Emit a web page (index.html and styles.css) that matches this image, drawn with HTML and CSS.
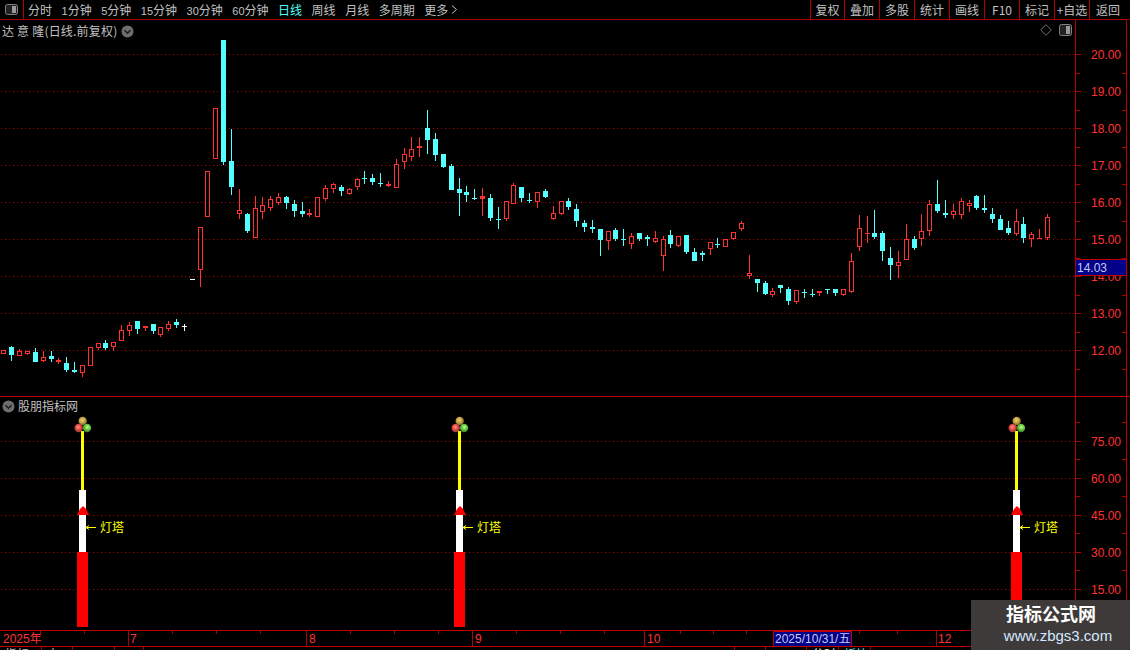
FILE: index.html
```html
<!DOCTYPE html>
<html lang="zh-CN">
<head>
<meta charset="utf-8">
<title>达意隆 日线</title>
<link rel="stylesheet" href="styles.css">
</head>
<body>
<div class="app">
  <header class="toolbar">
    <div class="panel-toggle">
      <svg class="icon-toggle" width="13" height="11" viewBox="0 0 13 11"><rect class="ti-frame" x="0.5" y="0.5" width="12" height="10" rx="2"/><rect class="ti-fill" x="7" y="2" width="4" height="7"/></svg>
    </div>
    <nav class="periods">
      <span>分时</span><span><i class="n">1</i>分钟</span><span><i class="n">5</i>分钟</span><span><i class="n">15</i>分钟</span><span><i class="n">30</i>分钟</span><span><i class="n">60</i>分钟</span><span class="on">日线</span><span>周线</span><span>月线</span><span>多周期</span><span class="more">更多<svg class="more-arrow" width="7" height="9" viewBox="0 0 7 9"><path d="M1 .5 5.5 4.5 1 8.5"/></svg></span>
    </nav>
    <nav class="actions">
      <span>复权</span><span>叠加</span><span>多股</span><span>统计</span><span>画线</span><span>F10</span><span>标记</span><span>+自选</span><span>返回</span>
    </nav>
  </header>

  <section class="pane pane-price">
    <div class="plot">
      <div class="pane-title">
        <span class="stock wide">达 意 隆(日线.前复权)</span>
        <svg class="chev" width="13" height="13" viewBox="0 0 13 13"><circle class="chev-disc" cx="6.5" cy="6.5" r="6"/><path class="chev-mark" d="M3.5 5.2 6.5 8.2 9.5 5.2"/></svg>
      </div>
      <div class="pane-tools">
        <svg width="12" height="12" viewBox="0 0 12 12"><path class="diamond" d="M6 .7 11.3 6 6 11.3 .7 6Z"/></svg>
        <svg class="icon-toggle" width="13" height="12" viewBox="0 0 13 12"><rect class="ti-frame" x="0.5" y="0.5" width="12" height="11" rx="2"/><rect class="ti-fill" x="7" y="2" width="4" height="8"/></svg>
      </div>
      <svg class="chart" width="1075" height="376" viewBox="0 20 1075 376">
        <g class="grid">
          <path d="M1 54.5H1075M1 91.5H1075M1 128.5H1075M1 165.5H1075M1 202.5H1075M1 239.5H1075M1 276.5H1075M1 313.5H1075M1 350.5H1075"/>
        </g>
        <g id="candles"></g>
      </svg>
    </div>
    <svg class="axis" width="54" height="376" viewBox="1076 20 54 376">
      <path class="axis-line" d="M1126.5 20V396M1076 54.5H1081M1076 91.5H1081M1076 128.5H1081M1076 165.5H1081M1076 202.5H1081M1076 239.5H1081M1076 276.5H1081M1076 313.5H1081M1076 350.5H1081M1076 73.5H1080M1076 110.5H1080M1076 147.5H1080M1076 184.5H1080M1076 221.5H1080M1076 258.5H1080M1076 295.5H1080M1076 332.5H1080M1076 369.5H1080M1122 73.5H1126M1122 110.5H1126M1122 147.5H1126M1122 184.5H1126M1122 221.5H1126M1122 258.5H1126M1122 295.5H1126M1122 332.5H1126M1122 369.5H1126"/>
      <text class="tick" x="1091" y="59">20.00</text>
      <text class="tick" x="1091" y="96">19.00</text>
      <text class="tick" x="1091" y="133">18.00</text>
      <text class="tick" x="1091" y="170">17.00</text>
      <text class="tick" x="1091" y="207">16.00</text>
      <text class="tick" x="1091" y="244">15.00</text>
      <text class="tick" x="1091" y="281">14.00</text>
      <text class="tick" x="1091" y="318">13.00</text>
      <text class="tick" x="1091" y="355">12.00</text>
      <rect class="cursor-box" x="1075.5" y="259.5" width="51" height="16"/>
      <text class="cursor-text" x="1077" y="272">14.03</text>
    </svg>
  </section>

  <section class="pane pane-ind">
    <div class="plot">
      <div class="pane-title sub">
        <svg class="chev" width="13" height="13" viewBox="0 0 13 13"><circle class="chev-disc" cx="6.5" cy="6.5" r="6"/><path class="chev-mark" d="M3.5 5.2 6.5 8.2 9.5 5.2"/></svg>
        <span class="stock">股朋指标网</span>
      </div>
      <svg class="chart" width="1075" height="233" viewBox="0 397 1075 233">
        <defs>
          <radialGradient id="ballGold" cx="0.45" cy="0.4" r="0.6"><stop offset="0" stop-color="#f2d070"/><stop offset="0.6" stop-color="#c09a3a"/><stop offset="1" stop-color="#6d6040"/></radialGradient>
          <radialGradient id="ballRed" cx="0.45" cy="0.4" r="0.6"><stop offset="0" stop-color="#ff9a90"/><stop offset="0.6" stop-color="#e03c34"/><stop offset="1" stop-color="#8a4a44"/></radialGradient>
          <radialGradient id="ballGreen" cx="0.55" cy="0.4" r="0.6"><stop offset="0" stop-color="#c8ff90"/><stop offset="0.6" stop-color="#58c030"/><stop offset="1" stop-color="#3f7a38"/></radialGradient>
          <g id="tower">
            <rect class="t-yellow" x="81" y="431" width="3" height="59"/>
            <rect class="t-white" x="79" y="490" width="7" height="62"/>
            <rect class="t-red" x="77" y="552" width="11" height="75"/>
            <path class="t-red" d="M77 515 80 509 83 506 86 509 89 515Z"/>
            <path class="t-arrow" d="M86 527.5H96M86 527.5 89 525.5M86 527.5 89 529.5"/>
            <circle cx="82.7" cy="421" r="4.2" fill="url(#ballGold)"/>
            <circle cx="78.7" cy="428" r="4.2" fill="url(#ballRed)"/>
            <circle cx="87" cy="428" r="4.2" fill="url(#ballGreen)"/>
          </g>
        </defs>
        <g class="grid">
          <path d="M1 441.5H1075M1 478.5H1075M1 515.5H1075M1 552.5H1075M1 589.5H1075"/>
        </g>
        <use href="#tower"/>
        <use href="#tower" x="377"/>
        <use href="#tower" x="934"/>
        <text class="tower-label" x="100" y="532">灯塔</text>
        <text class="tower-label" x="477" y="532">灯塔</text>
        <text class="tower-label" x="1034" y="532">灯塔</text>
      </svg>
    </div>
    <svg class="axis" width="54" height="233" viewBox="1076 397 54 233">
      <path class="axis-line" d="M1126.5 397V630M1076 441.5H1081M1076 478.5H1081M1076 515.5H1081M1076 552.5H1081M1076 589.5H1081M1076 422.5H1080M1076 459.5H1080M1076 496.5H1080M1076 533.5H1080M1076 570.5H1080M1076 607.5H1080M1122 422.5H1126M1122 459.5H1126M1122 496.5H1126M1122 533.5H1126M1122 570.5H1126M1122 607.5H1126"/>
      <text class="tick" x="1091" y="446">75.00</text>
      <text class="tick" x="1091" y="483">60.00</text>
      <text class="tick" x="1091" y="520">45.00</text>
      <text class="tick" x="1091" y="557">30.00</text>
      <text class="tick" x="1091" y="594">15.00</text>
    </svg>
  </section>

  <svg class="timeline" width="1130" height="15" viewBox="0 631 1130 15">
    <path class="axis-line" d="M128.5 631V646M306.5 631V646M472.5 631V646M644.5 631V646M936.5 631V646M40.5 631V634M84.5 631V634M172.5 631V634M216.5 631V634M260.5 631V634M350.5 631V634M394.5 631V634M438.5 631V634M516.5 631V634M560.5 631V634M604.5 631V634M680.5 631V634M713.5 631V634M746.5 631V634M859.5 631V634M897.5 631V634"/>
    <text class="tick" x="3" y="643">2025年</text>
    <text class="tick" x="130" y="643">7</text>
    <text class="tick" x="309" y="643">8</text>
    <text class="tick" x="475" y="643">9</text>
    <text class="tick" x="647" y="643">10</text>
    <text class="tick" x="938" y="643">12</text>
    <rect class="cursor-box" x="773.5" y="631" width="78" height="15"/>
    <text class="cursor-text" x="775" y="643">2025/10/31/五</text>
  </svg>

  <footer class="status">
    <span>指标</span><span>大</span><span></span><span></span><span></span><span></span><span></span><span class="white">分时</span><span class="cyan">板块</span><span></span>
  </footer>

  <aside class="watermark">
    <strong>指标公式网</strong>
    <em>www.zbgs3.com</em>
  </aside>
</div>
<script src="chart.js"></script>
</body>
</html>
```

FILE: styles.css
```css
* { box-sizing: border-box; }
html, body { margin: 0; padding: 0; background: #000; }
body { width: 1130px; height: 650px; overflow: hidden; font-family: "Noto Sans CJK SC", "Liberation Sans", sans-serif; font-size: 12px; color: #c0c0c0; }
svg { display: block; }
.app { position: relative; width: 1130px; height: 650px; overflow: hidden; display: flex; flex-direction: column; }

.toolbar { display: flex; height: 20px; border-bottom: 1px solid #b00000; flex: none; }
.panel-toggle { width: 24px; border-right: 1px solid #b00000; display: flex; align-items: center; justify-content: center; padding-right: 1px; }
.ti-frame { fill: #222; stroke: #808080; stroke-width: 1; }
.ti-fill { fill: #9a9a9a; }
.periods { display: flex; gap: 9.5px; padding-left: 4px; line-height: 19px; flex: 1; white-space: nowrap; }
.periods .on { color: #54ffff; }
.periods .n { font-family: "Liberation Sans", sans-serif; font-style: normal; font-size: 11px; }
.periods .more { display: flex; align-items: center; gap: 3px; }
.more-arrow path { fill: none; stroke: #c0c0c0; stroke-width: 1; }
.actions { display: grid; grid-template-columns: 34px repeat(7, 35px) 41px; width: 320px; line-height: 19px; text-align: center; }
.actions span { border-left: 1px solid #b00000; white-space: nowrap; }
.actions span:last-child { padding-right: 4px; }

.pane { display: flex; flex: none; border-bottom: 1px solid #c00000; }
.pane-price { height: 377px; }
.pane-ind { height: 234px; }
.plot { position: relative; width: 1076px; border-right: 1px solid #b00000; }
.pane-title { position: absolute; left: 2px; top: 3px; display: flex; align-items: center; gap: 3px; line-height: 16px; z-index: 1; }
.pane-title .wide { letter-spacing: 0.2px; margin-right: 1px; }
.pane-title.sub { top: 1px; }
.pane-tools { position: absolute; right: 3px; top: 4px; display: flex; gap: 7px; z-index: 1; }
.chev-disc { fill: #6e6e6e; }
.chev-mark { fill: none; stroke: #1c1c1c; stroke-width: 1.6; }
.diamond { fill: none; stroke: #707070; stroke-width: 1; }

.grid path { fill: none; stroke: #b80000; stroke-width: 1; stroke-dasharray: 1 3; }
.candle-wick { shape-rendering: crispEdges; }
.candle-wick.up { fill: #ff3232; }
.candle-wick.down { fill: #54ffff; }
.body-up { fill: #000; stroke: #ff3232; stroke-width: 1; shape-rendering: crispEdges; }
.body-flat { fill: #ff3232; shape-rendering: crispEdges; }
.body-down { fill: #54ffff; shape-rendering: crispEdges; }
.candle-wick.mark, .body-mark { fill: #fff; shape-rendering: crispEdges; }

.axis { flex: none; }
.axis-line { fill: none; stroke: #b00000; stroke-width: 1; shape-rendering: crispEdges; }
.tick { fill: #ff3232; font-family: "Liberation Sans", "Noto Sans CJK SC", sans-serif; font-size: 12px; }
.cursor-box { fill: #000088; stroke: #c00000; stroke-width: 1; shape-rendering: crispEdges; }
.cursor-text { fill: #c8c8f0; font-family: "Liberation Sans", "Noto Sans CJK SC", sans-serif; font-size: 12px; }

.t-yellow { fill: #ffff00; shape-rendering: crispEdges; }
.t-white { fill: #fff; shape-rendering: crispEdges; }
.t-red { fill: #ff0000; }
.t-arrow { fill: none; stroke: #ffff00; stroke-width: 1; }
.tower-label { fill: #ffff00; font-family: "Noto Sans CJK SC", sans-serif; font-size: 12px; }

.timeline { flex: none; }
.status { flex: none; height: 4px; border-top: 1px solid #c00000; display: grid; grid-template-columns: 42px 31px 42px 29px 591px 31px 41px 32px 32px 1fr; overflow: hidden; line-height: 14px; }
.status span { border-right: 1px solid #b00000; padding-left: 5px; overflow: hidden; }
.status .white { color: #fff; }
.status .cyan { color: #54ffff; }

.watermark { position: absolute; right: 0; bottom: 0; width: 159px; height: 50px; background: #3e3a3a; display: flex; flex-direction: column; align-items: center; padding-left: 1px; }
.watermark strong { font-size: 18px; line-height: 27px; color: #fff; font-weight: 700; }
.watermark em { font-family: "Liberation Sans", sans-serif; font-style: normal; font-size: 15px; line-height: 18px; color: #d4e8ff; margin-left: 14px; }
```

FILE: chart.js
```js
// [column, bodyTop, bodyBottom, wickTop, wickBottom, kind]  r=hollow up, f=flat up, c=down, w=white
var DATA = [
[3,350,354,350,354,'r'],[11,347,355,346,361,'c'],[19,351,356,349,356,'r'],[27,351,354,351,355,'r'],
[35,352,362,348,362,'c'],[43,357,361,351,362,'r'],[51,356,359,351,362,'c'],[58,360,362,358,364,'f'],
[66,363,370,357,372,'c'],[74,370,372,362,373,'c'],[82,365,373,365,377,'r'],[90,347,366,347,366,'r'],
[98,343,348,343,350,'r'],[105,343,348,340,350,'c'],[113,342,347,342,351,'r'],[121,330,341,325,341,'r'],
[129,325,331,322,336,'r'],[137,321,329,321,334,'c'],[145,326,328,326,331,'f'],[153,324,331,324,334,'c'],
[160,327,335,327,337,'r'],[168,324,329,321,331,'r'],[176,322,325,319,328,'c'],[184,326,327,324,331,'w'],
[192,279,280,279,280,'w'],[200,227,270,227,287,'r'],[207,171,217,171,217,'r'],[215,108,159,108,159,'r'],
[223,40,162,40,165,'c'],[231,161,187,129,195,'c'],[239,210,214,189,219,'r'],[247,214,231,213,233,'c'],
[255,208,238,196,238,'r'],[262,205,212,197,219,'r'],[270,199,208,196,211,'r'],[278,197,203,193,205,'r'],
[286,197,203,196,209,'c'],[294,204,211,200,217,'c'],[302,211,214,202,217,'c'],[309,213,215,209,217,'f'],
[317,197,217,197,217,'r'],[325,188,199,185,201,'r'],[333,184,189,183,193,'r'],[341,187,191,185,196,'c'],
[349,189,194,188,195,'r'],[357,179,187,178,190,'r'],[364,178,179,171,184,'c'],[372,178,182,174,185,'c'],
[380,183,184,173,187,'c'],[388,184,186,181,187,'f'],[396,164,188,159,188,'r'],[404,154,162,148,169,'r'],
[411,149,157,137,161,'r'],[419,146,148,137,157,'f'],[427,128,140,110,154,'c'],[435,139,155,133,161,'c'],
[443,154,167,154,168,'c'],[451,166,190,164,190,'c'],[459,189,193,178,216,'c'],[466,192,195,186,202,'c'],
[474,198,199,189,200,'c'],[482,196,199,188,216,'f'],[490,198,218,194,221,'c'],[498,219,220,207,229,'c'],
[506,201,219,201,221,'r'],[513,185,204,183,204,'r'],[521,187,198,187,202,'c'],[529,200,201,193,203,'c'],
[537,192,202,192,208,'r'],[545,191,197,189,198,'c'],[553,213,219,206,220,'r'],[561,201,214,201,215,'r'],
[568,201,207,198,210,'c'],[576,209,221,204,227,'c'],[584,223,227,220,232,'c'],[592,227,229,220,233,'c'],
[600,229,240,229,256,'c'],[608,231,241,231,250,'r'],[615,230,239,228,241,'c'],[623,239,240,229,246,'c'],
[631,236,244,233,249,'r'],[639,233,239,233,241,'c'],[647,237,239,235,246,'c'],[655,238,242,231,243,'r'],
[663,239,256,236,271,'r'],[670,235,244,230,248,'c'],[678,236,246,236,247,'r'],[686,235,252,235,254,'c'],
[694,252,261,248,261,'c'],[702,253,255,251,261,'c'],[710,242,249,242,255,'r'],[717,244,245,238,248,'c'],
[725,239,247,239,247,'r'],[733,232,239,232,240,'r'],[741,223,229,221,231,'r'],[749,273,276,255,279,'r'],
[757,279,283,279,292,'c'],[765,283,294,281,295,'c'],[772,291,295,288,297,'r'],[780,285,288,285,293,'c'],
[788,289,301,287,305,'c'],[796,290,302,290,304,'r'],[804,292,293,289,298,'c'],[812,294,295,289,297,'c'],
[819,291,293,291,296,'f'],[827,289,290,289,294,'c'],[835,289,293,289,296,'c'],[843,289,295,289,296,'r'],
[851,261,292,253,293,'r'],[859,228,247,215,251,'r'],[867,233,234,216,243,'f'],[874,233,237,210,239,'c'],
[882,233,251,231,261,'c'],[890,258,265,247,280,'c'],[898,262,266,251,278,'r'],[906,239,260,224,260,'r'],
[914,239,248,236,250,'c'],[921,231,239,214,246,'r'],[929,204,231,200,236,'r'],[937,204,211,180,213,'c'],
[945,213,215,200,218,'c'],[953,211,215,204,219,'r'],[961,201,215,198,219,'r'],[969,203,206,200,212,'r'],
[976,196,208,195,210,'c'],[984,208,210,195,213,'c'],[992,214,219,208,223,'c'],[1000,219,230,215,230,'c'],
[1008,228,233,221,235,'c'],[1016,221,234,209,236,'r'],[1023,224,238,217,243,'c'],[1031,234,239,232,247,'r'],
[1039,238,239,229,239,'f'],[1047,217,238,214,240,'r']
];
var NS = 'http://www.w3.org/2000/svg';
var host = document.getElementById('candles');
function rect(cls, x, y, w, h) {
  var r = document.createElementNS(NS, 'rect');
  r.setAttribute('class', cls);
  r.setAttribute('x', x); r.setAttribute('y', y);
  r.setAttribute('width', w); r.setAttribute('height', h);
  host.appendChild(r);
}
DATA.forEach(function (d) {
  var c = d[0], top = d[1], bot = d[2], wt = d[3], wb = d[4], k = d[5];
  var wick = k === 'c' ? 'down' : (k === 'w' ? 'mark' : 'up');
  rect('candle-wick ' + wick, c, wt, 1, wb - wt);
  if (k === 'r') rect('body-up', c - 1.5, top + 0.5, 4, bot - top - 1);
  else if (k === 'f') rect('body-flat', c - 2, top, 5, bot - top);
  else if (k === 'c') rect('body-down', c - 2, top, 5, bot - top);
  else rect('body-mark', c - 2, top, 5, 1);
});
```
